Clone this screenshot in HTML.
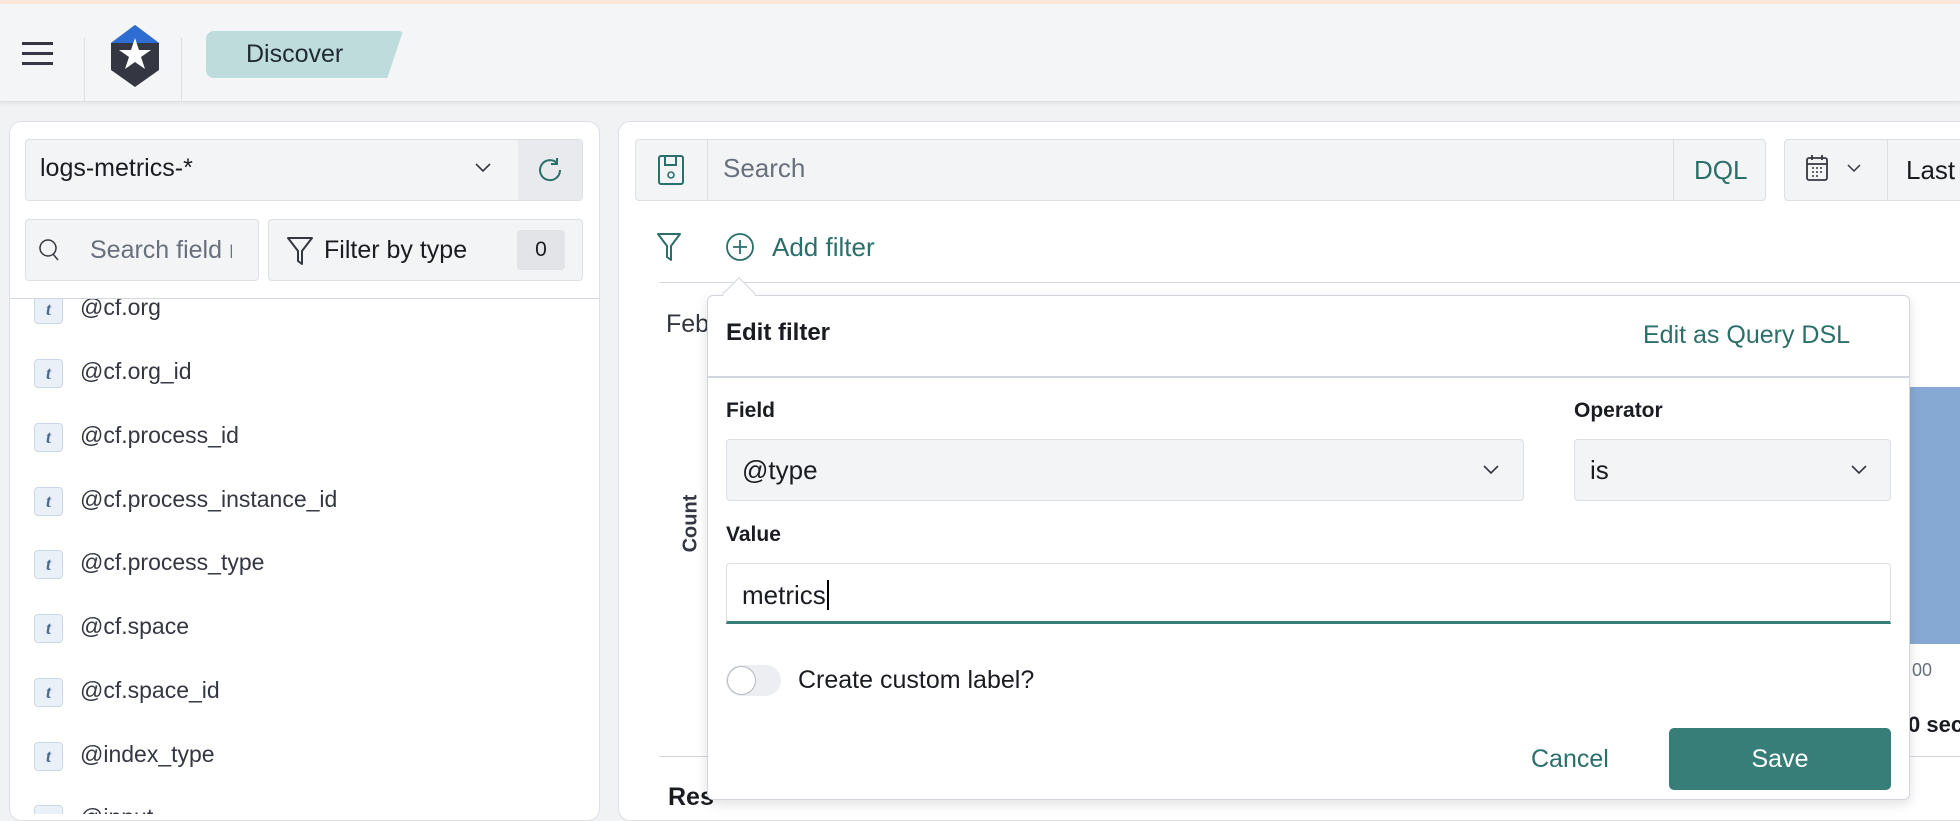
<!DOCTYPE html>
<html><head><meta charset="utf-8"><style>
*{box-sizing:border-box;margin:0;padding:0}
body{width:1960px;height:814px;overflow:hidden;background:#f1f2f4;font-family:"Liberation Sans",sans-serif;color:#1a1c21;position:relative}
.a{position:absolute;white-space:nowrap}
.t{font-size:22px;color:#343741;white-space:nowrap}
.inp{background:#f3f4f6;border:1px solid #dcdfe4;border-radius:4px}
.teal{color:#2b6f6a}
.fi{position:absolute;left:24px;width:29px;height:29px;border:1px solid #c9d8e8;background:#e9f0f8;border-radius:4px;color:#4f6a8d;font:italic bold 18px "Liberation Serif",serif;text-align:center;line-height:27px}
.fn{position:absolute;left:70px;font-size:23px;color:#343741}
</style></head><body>
<div class="a" style="left:0;top:0;width:1960px;height:4px;background:#fbe6da"></div>
<div class="a" style="left:0;top:4px;width:1960px;height:98px;background:#f4f5f6;border-bottom:1px solid #dfe1e5;box-shadow:0 2px 4px rgba(0,0,0,.06)"></div>
<div class="a" style="left:22px;top:42px;width:31px;height:3px;background:#343741"></div>
<div class="a" style="left:22px;top:52px;width:31px;height:3px;background:#343741"></div>
<div class="a" style="left:22px;top:62px;width:31px;height:3px;background:#343741"></div>
<div class="a" style="left:84px;top:38px;width:1px;height:64px;background:#dcdfe3"></div>
<div class="a" style="left:181px;top:38px;width:1px;height:64px;background:#dcdfe3"></div>
<svg class="a" style="left:110px;top:24px" width="50" height="64" viewBox="0 0 50 64"><polygon points="25,1 49,19 49,46 25,63 1,46 1,19" fill="#343741"/><polygon points="25,1 49,19 1,19" fill="#2e6ed2"/><polygon points="25,14 29,26 41,26 31,33 35,45 25,38 15,45 19,33 9,26 21,26" fill="#fff"/></svg>
<div class="a" style="left:206px;top:31px;width:197px;height:47px;background:#bfdcdc;border-radius:8px 4px 8px 8px;clip-path:polygon(0 0,100% 0,92% 100%,0 100%)"></div>
<div class="a" style="left:246px;top:40px;font-size:25px;color:#1f2a33">Discover</div>

<div class="a" style="left:9px;top:121px;width:591px;height:700px;background:#fff;border:1px solid #dcdfe4;border-radius:12px"></div>
<div class="a inp" style="left:25px;top:139px;width:558px;height:62px"></div>
<div class="a" style="left:518px;top:140px;width:64px;height:60px;background:#e8eaed"></div>
<div class="a t" style="left:40px;top:154px;font-size:25px;color:#1a1c21">logs-metrics-*</div>
<svg class="a" style="left:475px;top:163px" width="16" height="10"><path d="M1 1l7 7 7-7" stroke="#343741" stroke-width="1.6" fill="none"/></svg>
<svg class="a" style="left:535px;top:155px" width="30" height="30" viewBox="0 0 30 30"><path d="M22 8A10 10 0 1 0 25 15" stroke="#2b6f6a" stroke-width="2" fill="none"/><path d="M22 3v6h-6" stroke="#2b6f6a" stroke-width="2" fill="none"/></svg>
<div class="a inp" style="left:25px;top:219px;width:234px;height:62px"></div>
<svg class="a" style="left:38px;top:238px" width="22" height="24"><circle cx="10" cy="10" r="8" stroke="#343741" stroke-width="1.5" fill="none"/><path d="M15 16l5 6" stroke="#343741" stroke-width="1.5"/></svg>
<div class="a t" style="left:90px;top:236px;font-size:25px;color:#69707d;width:142px;overflow:hidden">Search field names</div>
<div class="a inp" style="left:268px;top:219px;width:315px;height:62px"></div>
<svg class="a" style="left:286px;top:236px" width="28" height="30"><path d="M2 2h24L16 15v13l-4-3V15z" stroke="#343741" stroke-width="2" fill="none" stroke-linejoin="round"/></svg>
<div class="a t" style="left:324px;top:236px;font-size:25px;color:#1a1c21">Filter by type</div>
<div class="a" style="left:517px;top:230px;width:48px;height:40px;background:#e2e4e8;border-radius:4px;font-size:21px;text-align:center;line-height:40px">0</div>
<div class="a" style="left:10px;top:298px;width:589px;height:1px;background:#d3d6dc"></div>
<div class="a" style="left:10px;top:299px;width:589px;height:515px;overflow:hidden">
<div class="fi" style="top:-4px">t</div><div class="fn" style="top:-5px">@cf.org</div>
<div class="fi" style="top:60px">t</div><div class="fn" style="top:59px">@cf.org_id</div>
<div class="fi" style="top:124px">t</div><div class="fn" style="top:123px">@cf.process_id</div>
<div class="fi" style="top:188px">t</div><div class="fn" style="top:187px">@cf.process_instance_id</div>
<div class="fi" style="top:251px">t</div><div class="fn" style="top:250px">@cf.process_type</div>
<div class="fi" style="top:315px">t</div><div class="fn" style="top:314px">@cf.space</div>
<div class="fi" style="top:379px">t</div><div class="fn" style="top:378px">@cf.space_id</div>
<div class="fi" style="top:443px">t</div><div class="fn" style="top:442px">@index_type</div>
<div class="fi" style="top:506px">t</div><div class="fn" style="top:505px">@input</div>
</div>

<div class="a" style="left:618px;top:121px;width:1400px;height:700px;background:#fff;border:1px solid #dcdfe4;border-radius:12px"></div>
<div class="a inp" style="left:635px;top:139px;width:1131px;height:62px"></div>
<div class="a" style="left:707px;top:140px;width:1px;height:60px;background:#dcdfe4"></div>
<div class="a" style="left:1673px;top:140px;width:1px;height:60px;background:#dcdfe4"></div>
<svg class="a" style="left:657px;top:154px" width="28" height="32" viewBox="0 0 28 32"><rect x="2" y="2" width="24" height="28" rx="2" stroke="#2b6f6a" stroke-width="2" fill="none"/><path d="M8 2v9h11V2" stroke="#2b6f6a" stroke-width="2" fill="none"/><circle cx="14" cy="21" r="3" stroke="#2b6f6a" stroke-width="1.6" fill="none"/></svg>
<div class="a t" style="left:723px;top:153px;font-size:26px;color:#69707d">Search</div>
<div class="a teal" style="left:1694px;top:155px;font-size:26px">DQL</div>
<div class="a inp" style="left:1784px;top:139px;width:200px;height:62px"></div>
<div class="a" style="left:1887px;top:140px;width:1px;height:60px;background:#dcdfe4"></div>
<svg class="a" style="left:1805px;top:153px" width="24" height="30"><rect x="2" y="5" width="20" height="22" rx="2" stroke="#343741" stroke-width="1.8" fill="none"/><path d="M2 11h20M7 2v5M17 2v5" stroke="#343741" stroke-width="1.8"/><path d="M7 15h2M11 15h2M15 15h2M7 19h2M11 19h2M15 19h2M7 23h2M11 23h2" stroke="#343741" stroke-width="1.6"/></svg>
<svg class="a" style="left:1847px;top:164px" width="14" height="9"><path d="M1 1l6 6 6-6" stroke="#343741" stroke-width="1.5" fill="none"/></svg>
<div class="a t" style="left:1906px;top:155px;font-size:26px;color:#1a1c21">Last</div>
<svg class="a" style="left:656px;top:232px" width="26" height="30"><path d="M2 2h22L15 14v14l-4-3V14z" stroke="#2b6f6a" stroke-width="2" fill="none" stroke-linejoin="round"/></svg>
<svg class="a" style="left:725px;top:232px" width="30" height="30"><circle cx="15" cy="15" r="13" stroke="#2b6f6a" stroke-width="1.8" fill="none"/><path d="M15 8v14M8 15h14" stroke="#2b6f6a" stroke-width="1.8"/></svg>
<div class="a teal" style="left:772px;top:232px;font-size:26px">Add filter</div>
<div class="a" style="left:659px;top:282px;width:1301px;height:1px;background:#d3d6dc"></div>
<div class="a t" style="left:666px;top:310px;font-size:25px">Feb</div>
<div class="a" style="left:662px;top:512px;transform:rotate(-90deg);font-size:20px;font-weight:bold;color:#343741">Count</div>
<div class="a" style="left:1910px;top:387px;width:50px;height:257px;background:#86a9d4"></div>
<div class="a" style="left:1912px;top:660px;font-size:18px;color:#69707d">00</div>
<div class="a" style="left:1908px;top:712px;font-size:22px;font-weight:bold">0 sec</div>
<div class="a" style="left:659px;top:756px;width:1301px;height:1px;background:#d3d6dc"></div>
<div class="a" style="left:668px;top:783px;font-size:25px;font-weight:bold">Res</div>

<div class="a" style="left:707px;top:295px;width:1203px;height:505px;background:#fff;border:1px solid #d3d6dc;border-radius:6px;box-shadow:0 4px 12px rgba(0,0,0,.12)"></div>
<div class="a" style="left:727px;top:282px;width:24px;height:24px;background:#fff;border-left:1px solid #d3d6dc;border-top:1px solid #d3d6dc;transform:rotate(45deg)"></div>
<div class="a" style="left:726px;top:319px;font-size:24px;font-weight:bold;color:#1a1c21">Edit filter</div>
<div class="a teal" style="left:1643px;top:321px;font-size:25px">Edit as Query DSL</div>
<div class="a" style="left:708px;top:376px;width:1201px;height:2px;background:#d3d6dc"></div>
<div class="a" style="left:726px;top:399px;font-size:21px;font-weight:bold">Field</div>
<div class="a" style="left:1574px;top:399px;font-size:21px;font-weight:bold">Operator</div>
<div class="a inp" style="left:726px;top:439px;width:798px;height:62px"></div>
<div class="a t" style="left:742px;top:455px;font-size:26px;color:#1a1c21">@type</div>
<svg class="a" style="left:1483px;top:465px" width="16" height="10"><path d="M1 1l7 7 7-7" stroke="#343741" stroke-width="1.6" fill="none"/></svg>
<div class="a inp" style="left:1574px;top:439px;width:317px;height:62px"></div>
<div class="a t" style="left:1590px;top:455px;font-size:26px;color:#1a1c21">is</div>
<svg class="a" style="left:1851px;top:465px" width="16" height="10"><path d="M1 1l7 7 7-7" stroke="#343741" stroke-width="1.6" fill="none"/></svg>
<div class="a" style="left:726px;top:523px;font-size:21px;font-weight:bold">Value</div>
<div class="a" style="left:726px;top:563px;width:1165px;height:61px;background:#fff;border:1px solid #dcdfe4;border-bottom:3px solid #377d78;border-radius:4px 4px 0 0"></div>
<div class="a t" style="left:742px;top:580px;font-size:26px;color:#1a1c21">metrics<span style="border-left:2px solid #000;margin-left:1px"></span></div>
<div class="a" style="left:726px;top:665px;width:55px;height:31px;background:#eceef1;border-radius:16px"></div>
<div class="a" style="left:727px;top:666px;width:29px;height:29px;background:#fff;border:1px solid #b4b9c1;border-radius:50%"></div>
<div class="a t" style="left:798px;top:666px;font-size:25px;color:#1a1c21">Create custom label?</div>
<div class="a teal" style="left:1531px;top:745px;font-size:25px">Cancel</div>
<div class="a" style="left:1669px;top:728px;width:222px;height:62px;background:#377d78;border-radius:5px;color:#fff;font-size:25px;text-align:center;line-height:62px">Save</div>
</body></html>
